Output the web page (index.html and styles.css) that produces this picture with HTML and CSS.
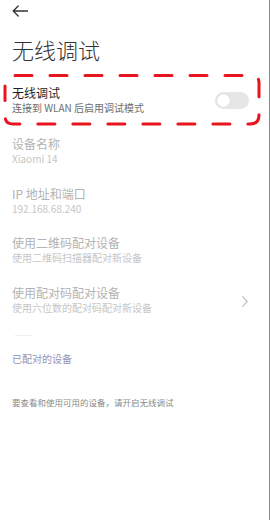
FILE: index.html
```html
<!DOCTYPE html>
<html lang="zh-CN">
<head>
<meta charset="utf-8">
<link rel="stylesheet" href="styles.css">
</head>
<body>
<div class="screen">
  <div class="topbar">
    <svg class="back" width="16" height="12" viewBox="0 0 16 12">
      <path d="M15.5 6H1.2M6.2 1L1.2 6l5 5" fill="none" stroke="#333" stroke-width="1.3" stroke-linecap="round" stroke-linejoin="round"/>
    </svg>
  </div>
  <h1 class="title">无线调试</h1>

  <div class="toggle-row">
    <div class="texts">
      <div class="t-main">无线调试</div>
      <div class="t-sub">连接到 WLAN 后启用调试模式</div>
    </div>
    <div class="switch"><div class="knob"></div></div>
    <svg class="mark" width="270" height="60" viewBox="0 0 270 60">
      <path d="M15 5.5H251.5Q259 5.5 259 13V45Q259 54 250 54H13Q5 54 5 46V16" fill="none" stroke="#e8141e" stroke-width="3" stroke-dasharray="17 18" stroke-linecap="round"/>
    </svg>
  </div>

  <div class="item">
    <div class="i-main">设备名称</div>
    <div class="i-sub">Xiaomi 14</div>
  </div>
  <div class="item">
    <div class="i-main">IP 地址和端口</div>
    <div class="i-sub">192.168.68.240</div>
  </div>
  <div class="item">
    <div class="i-main">使用二维码配对设备</div>
    <div class="i-sub">使用二维码扫描器配对新设备</div>
  </div>
  <div class="item with-arrow">
    <div class="texts">
      <div class="i-main">使用配对码配对设备</div>
      <div class="i-sub">使用六位数的配对码配对新设备</div>
    </div>
    <svg class="chev" width="6" height="11" viewBox="0 0 6 11">
      <path d="M0.7 0.7L5.2 5.5 0.7 10.3" fill="none" stroke="#bdbdbd" stroke-width="1.1" stroke-linecap="round" stroke-linejoin="round"/>
    </svg>
  </div>

  <div class="divider"></div>
  <div class="section">已配对的设备</div>
  <div class="hint">要查看和使用可用的设备，请开启无线调试</div>
</div>
</body>
</html>
```

FILE: styles.css
```css
html, body {
  margin: 0;
  padding: 0;
  background: #ffffff;
}
.screen {
  width: 269px;
  height: 520px;
  border-right: 1px solid #8c8c8c;
  font-family: "Noto Sans CJK SC", "Noto Sans", sans-serif;
  background: #ffffff;
}
.topbar {
  height: 22px;
  display: flex;
  align-items: center;
  padding-left: 12px;
}
.back { display: block; }
.title {
  margin: 12px 0 0 0;
  padding-left: 12px;
  font-size: 22px;
  line-height: 30px;
  font-weight: 300;
  color: #333333;
}
.toggle-row {
  position: relative;
  margin-top: 21px;
  padding: 0 20px 0 12px;
  display: flex;
  align-items: center;
  justify-content: space-between;
}
.t-main {
  font-size: 12px;
  line-height: 16px;
  color: #1f1f1f;
}
.t-sub {
  font-size: 10px;
  line-height: 14px;
  color: #6e6e6e;
}
.switch {
  width: 34px;
  height: 17px;
  border-radius: 9px;
  background: #e6e6e6;
  display: flex;
  align-items: center;
  padding-left: 2px;
  box-sizing: border-box;
}
.knob {
  width: 13px;
  height: 13px;
  border-radius: 50%;
  background: #ffffff;
  box-shadow: 0 0 1px rgba(0,0,0,0.15);
}
.mark {
  position: absolute;
  left: 0;
  top: -15px;
  pointer-events: none;
}
.item {
  padding: 10.25px 12px;
}
.toggle-row + .item { margin-top: 10.75px; }
.i-main {
  font-size: 12px;
  line-height: 16px;
  color: #b3b3b3;
}
.i-sub {
  font-size: 10px;
  line-height: 13px;
  color: #c6c6c6;
}
.with-arrow {
  display: flex;
  align-items: center;
  justify-content: space-between;
  padding-right: 21px;
}
.chev { display: block; margin-top: 4px; }
.divider {
  margin: 11px 0 0 15px;
  width: 17px;
  height: 1px;
  background: #eeeeee;
}
.section {
  margin-top: 16px;
  padding-left: 12px;
  font-size: 10px;
  line-height: 14px;
  color: #9393b5;
}
.hint {
  margin-top: 30px;
  padding-left: 12px;
  font-size: 8.5px;
  line-height: 12px;
  color: #8a8a8a;
}
```
